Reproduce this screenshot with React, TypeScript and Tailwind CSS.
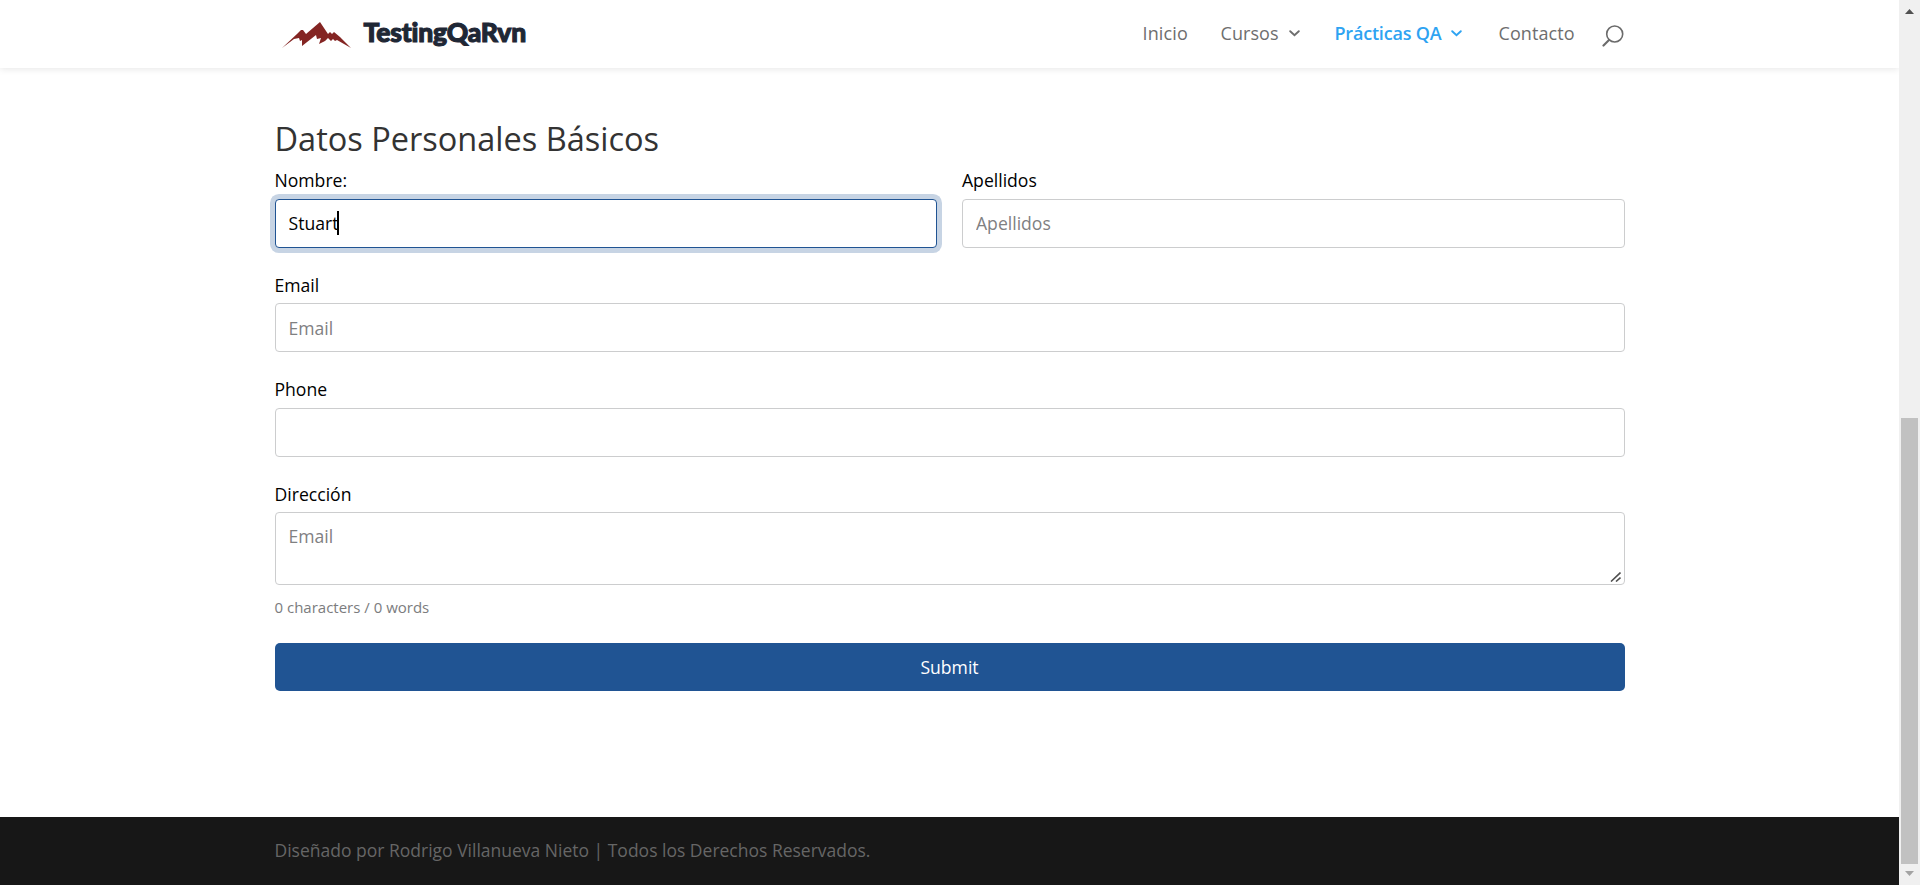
import React from "react";

const fieldClass =
  "block h-[49px] w-full rounded-[4px] border border-[#cccdce] bg-white px-[13px] text-[17.6px] text-black outline-none placeholder:text-[#7f8082]";

function Label({ children }: { children: React.ReactNode }) {
  return <label className="block h-[27px] text-[17.6px] leading-[19px] text-black">{children}</label>;
}

function Chevron() {
  return (
    <svg className="mt-px" width="11" height="7" viewBox="0 0 11 7" fill="none" stroke="currentColor" strokeWidth="1.9">
      <path d="M1.2 1.2 L5.5 5.2 L9.8 1.2" strokeLinecap="round" />
    </svg>
  );
}

function Logo() {
  return (
    <div className="flex h-full items-center">
      <svg className="mt-px shrink-0" width="70" height="28" viewBox="0 0 70 28">
        <path
          fill="#842523"
          d="M0 27 L15 13 L19 9 L21 9 L24 13 L38 1 L46 13 L48 11 L50 13 L52 11 L58 16 L69 27 L55 19 L53 20 L51 18 L49 20 L46 17 L43 20 L37 23 L39 17 L35 18 L34 14 L20 25 L20 19 L18 20 L17 17 L12 18 Z"
        />
      </svg>
      <span className="mb-[4px] ml-[12px] font-['Lato'] text-[26.5px] font-black leading-[32px] tracking-[-0.2px] text-[#1f2735] [-webkit-text-stroke:1.1px_#1f2735]">
        TestingQaRvn
      </span>
    </div>
  );
}

function Header() {
  return (
    <header className="h-[68px] shrink-0 bg-white shadow-[0_1px_7px_rgba(0,0,0,0.1)]">
      <div className="mx-auto flex h-full w-[1350px] justify-between pl-[7px]">
        <Logo />
        <nav className="flex h-[66px] items-center text-[18px] font-medium text-[#6e6e6e]">
          <a className="w-[78px] tracking-[0.15px]">Inicio</a>
          <a className="flex w-[114px] items-center gap-[10px] tracking-[0.05px]">Cursos <Chevron /></a>
          <a className="flex w-[164px] items-center gap-[10px] font-semibold tracking-[-0.2px] text-[#2ea3f2]">Prácticas QA <Chevron /></a>
          <a className="w-[103px] tracking-[0.08px]">Contacto</a>
          <svg className="mt-[5px] mr-px" width="22" height="22" viewBox="0 0 22 22" fill="none" stroke="#6b6b6b">
            <circle cx="12.7" cy="9" r="8" strokeWidth="1.6" />
            <path d="M7 15 L1.5 20.5" strokeWidth="2.2" strokeLinecap="round" />
          </svg>
        </nav>
      </div>
    </header>
  );
}

function Scrollbar() {
  return (
    <div className="flex h-full w-[21px] shrink-0 flex-col items-center bg-[#f0f0f0]">
      <svg className="mt-[9px]" width="9" height="5" viewBox="0 0 9 5"><path fill="#505050" d="M4.5 0 L9 5 H0 Z" /></svg>
      <div className="mt-auto mr-px h-[446px] w-[17px] bg-[#c1c1c1]" />
      <svg className="mt-[7px] mb-[9px]" width="9" height="5" viewBox="0 0 9 5"><path fill="#a3a3a3" d="M0 0 H9 L4.5 5 Z" /></svg>
    </div>
  );
}

export default function App() {
  return (
    <div className="flex h-[885px] w-[1920px] overflow-hidden bg-white font-['Open_Sans',sans-serif]">
      <div className="flex min-w-0 flex-1 flex-col">
        <Header />
        <main className="mx-auto w-[1350px] flex-1 pt-[50px]">
          <h1 className="h-[49px] text-[32.5px] leading-[42px] text-[#333]">Datos Personales Básicos</h1>
          <form className="pt-[4px]">
            <div className="flex gap-[25px]">
              <div className="flex-1 pb-px">
                <Label>Nombre:</Label>
                <div className="relative mt-px">
                  <input
                    className="block h-[49px] w-full rounded-[4px] border border-[#205493] bg-white px-[13px] pb-[2px] text-[17.6px] text-black shadow-[0_0_0_5px_#c7d4e4] outline-none"
                    defaultValue="Stuart"
                  />
                  <span className="absolute left-[62px] top-[12px] h-[24px] w-[2px] bg-black" />
                </div>
              </div>
              <div className="flex-1">
                <Label>Apellidos</Label>
                <input className={`mt-px pb-[2px] ${fieldClass}`} placeholder="Apellidos" />
              </div>
            </div>
            <div className="mt-[27px]">
              <Label>Email</Label>
              <input className={fieldClass} placeholder="Email" />
            </div>
            <div className="mt-[28px]">
              <Label>Phone</Label>
              <input className={`mt-px ${fieldClass}`} />
            </div>
            <div className="mt-[28px]">
              <Label>Dirección</Label>
              <div className="relative">
                <textarea
                  className="block h-[73px] w-full resize-none rounded-[4px] border border-[#cccdce] bg-white px-[13px] py-[10px] text-[17.6px] leading-[27px] text-black outline-none placeholder:text-[#7f8082]"
                  placeholder="Email"
                />
                <svg className="absolute bottom-[3px] right-[4px]" width="11" height="10" viewBox="0 0 11 10" stroke="#505050" strokeWidth="1.6">
                  <path d="M1 9.5 L10.5 0.5 M6 9.5 L10.5 5.5" />
                </svg>
              </div>
            </div>
            <p className="mt-[10px] h-[48px] text-[15px] leading-[24px] text-[#7b7c7e]">0 characters / 0 words</p>
            <button type="button" className="block h-[48px] w-full rounded-[5px] bg-[#205493] text-[17.6px] text-white">Submit</button>
          </form>
        </main>
        <footer className="h-[68px] shrink-0 bg-[#171717]">
          <p className="mx-auto w-[1350px] text-[17.5px] leading-[67px] text-[#666]">
            Diseñado por Rodrigo Villanueva Nieto | Todos los Derechos Reservados.
          </p>
        </footer>
      </div>
      <Scrollbar />
    </div>
  );
}
